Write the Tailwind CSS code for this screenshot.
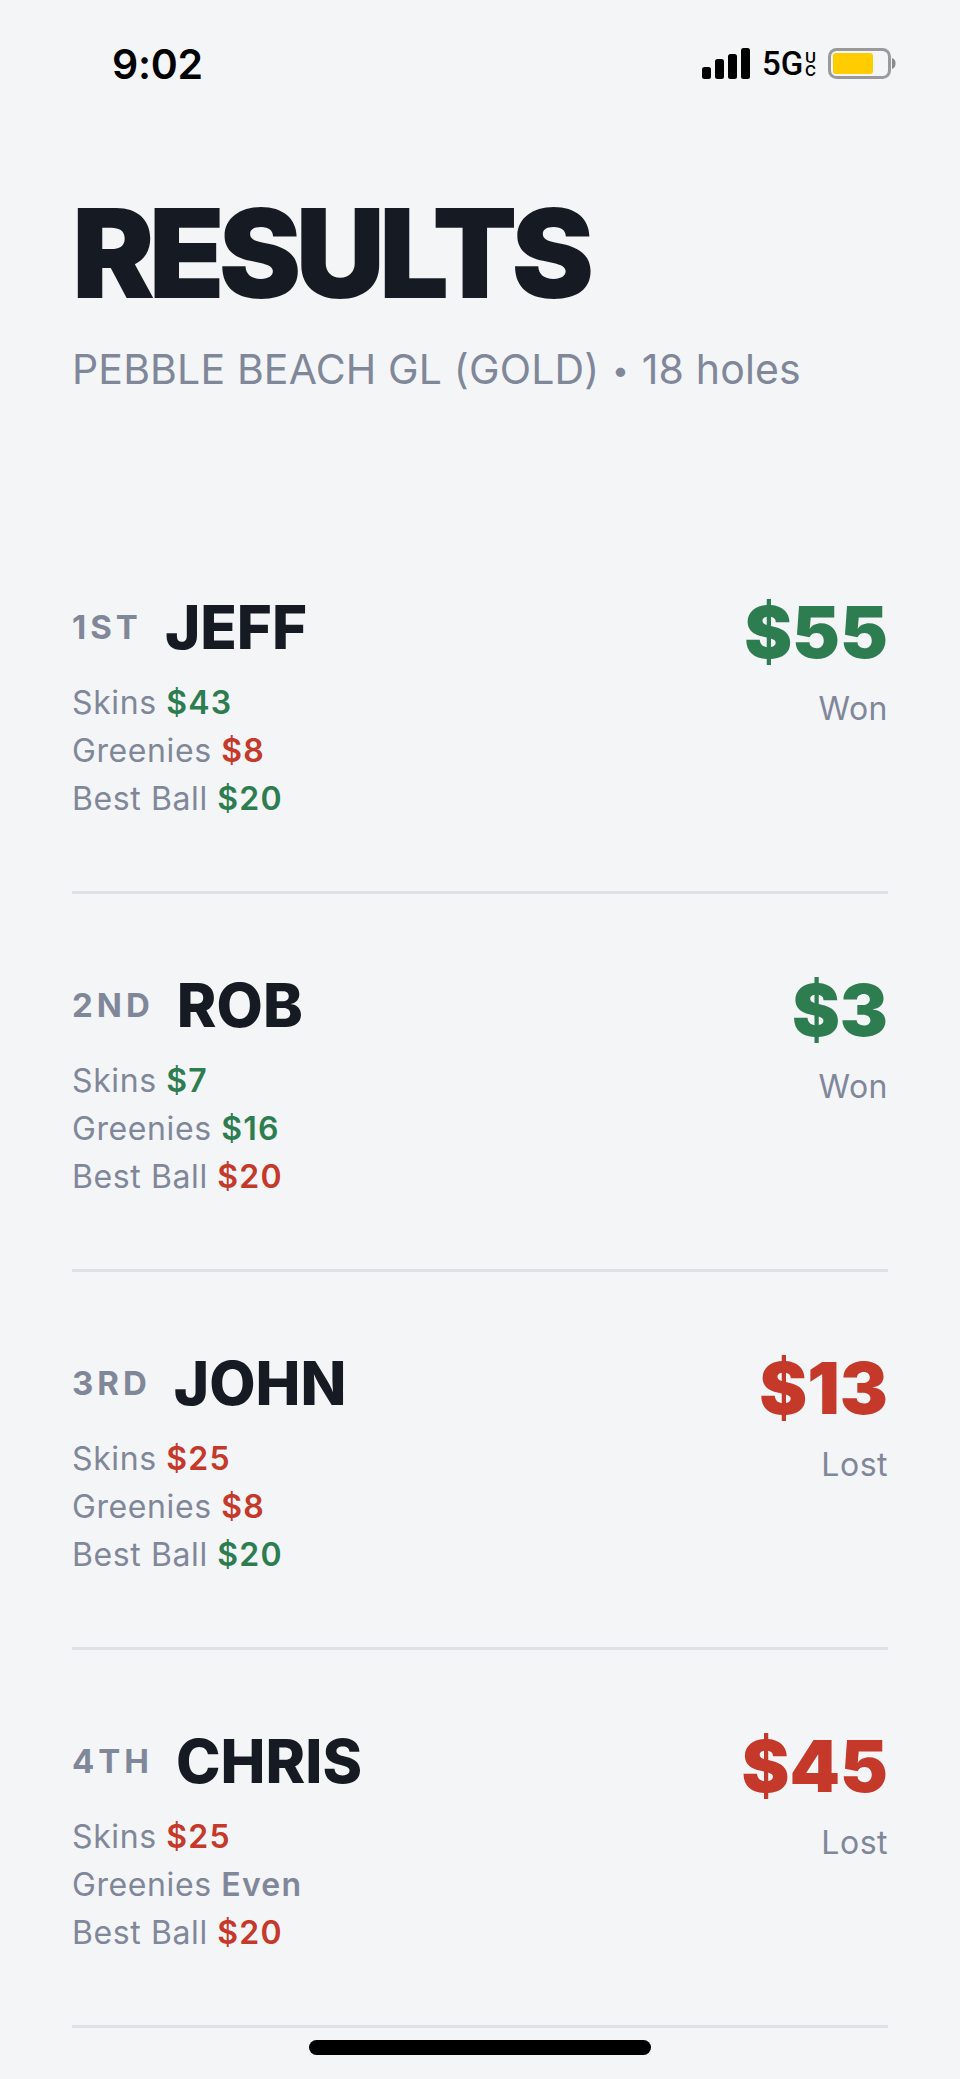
<!DOCTYPE html>
<html lang="en">
<head>
  <meta charset="UTF-8" />
  <meta name="viewport" content="width=device-width, initial-scale=1.0"/>
  <title>Results</title>
  <script src="https://cdn.jsdelivr.net/npm/@tailwindcss/browser@4"></script>
</head>
<body class="bg-[#f4f5f7] font-['Inter',sans-serif] text-[#161a23]">
<div class="relative h-[2079px] w-[960px] overflow-hidden">

  <!-- Status bar -->
  <div class="flex h-[96px] items-start justify-between pl-[112px] pr-[62px] pt-[39px]">
    <span class="text-[41px] leading-[50px] font-semibold tracking-[-0.3px] text-black">9:02</span>
    <div class="flex items-center pt-[9px]">
      <svg width="48" height="32" viewBox="0 0 48 32" class="block">
        <rect x="0" y="19" width="9" height="12" rx="2.5" fill="#000"/>
        <rect x="13" y="11" width="9" height="20" rx="2.5" fill="#000"/>
        <rect x="26" y="6" width="9" height="25" rx="2.5" fill="#000"/>
        <rect x="39" y="0" width="9" height="31" rx="2.5" fill="#000"/>
      </svg>
      <span class="ml-[12px] w-[41px] font-['Roboto',sans-serif] text-[33px] leading-[32px] font-medium whitespace-nowrap text-black">5G</span>
      <span class="ml-[2px] w-[11px] text-center text-[15px] leading-[13px] font-semibold text-black">U<br>C</span>
      <svg width="70" height="32" viewBox="0 0 70 32" class="ml-[12px] block">
        <rect x="1.5" y="1.5" width="60" height="28" rx="7" fill="none" stroke="#9a9a9c" stroke-width="3"/>
        <rect x="5" y="5" width="40" height="21" rx="3" fill="#ffcc00"/>
        <path d="M64 10 C67 11 67.5 13 67.5 15.5 C67.5 18 67 20 64 21 Z" fill="#8a8a8c"/>
      </svg>
    </div>
  </div>

  <!-- Title -->
  <div class="px-[72px]">
    <h1 class="mt-[92px] text-[124px] leading-[130px] font-black tracking-[-6px]">RESULTS</h1>
    <p class="mt-[27px] text-[41px] leading-[48px] tracking-[0.15px] text-[#808799]">PEBBLE BEACH GL (GOLD) <span class="mx-[1px] align-[3px] text-[30px]">•</span> 18 holes</p>
  </div>

  <!-- Players -->
  <div class="mt-[122px] flex flex-col px-[72px]">

    <div class="flex h-[378px] items-start justify-between border-b-[3px] border-[#dfe1e7] pt-[76px]">
      <div>
        <div class="flex items-center gap-[23px]">
          <span class="text-[33px] leading-[70px] font-bold tracking-[4px] text-[#808799]">1ST</span>
          <span class="text-[60px] leading-[70px] font-extrabold">JEFF</span>
        </div>
        <div class="mt-[17px] text-[32px] leading-[48px] tracking-[0.6px] text-[#808799]">
          <p>Skins <span class="font-semibold tracking-[1.2px] text-[#2e7d50]">$43</span></p>
          <p>Greenies <span class="font-semibold tracking-[1.2px] text-[#c5392b]">$8</span></p>
          <p>Best Ball <span class="font-semibold tracking-[1.2px] text-[#2e7d50]">$20</span></p>
        </div>
      </div>
      <div class="pt-[3px] text-right">
        <p class="text-[72px] leading-[74px] font-black text-[#2e7d50]">$55</p>
        <p class="mt-[20px] text-[32px] leading-[40px] tracking-[0.5px] text-[#808799]">Won</p>
      </div>
    </div>

    <div class="flex h-[378px] items-start justify-between border-b-[3px] border-[#dfe1e7] pt-[76px]">
      <div>
        <div class="flex items-center gap-[23px]">
          <span class="text-[33px] leading-[70px] font-bold tracking-[4px] text-[#808799]">2ND</span>
          <span class="text-[60px] leading-[70px] font-extrabold">ROB</span>
        </div>
        <div class="mt-[17px] text-[32px] leading-[48px] tracking-[0.6px] text-[#808799]">
          <p>Skins <span class="font-semibold tracking-[1.2px] text-[#2e7d50]">$7</span></p>
          <p>Greenies <span class="font-semibold tracking-[1.2px] text-[#2e7d50]">$16</span></p>
          <p>Best Ball <span class="font-semibold tracking-[1.2px] text-[#c5392b]">$20</span></p>
        </div>
      </div>
      <div class="pt-[3px] text-right">
        <p class="text-[72px] leading-[74px] font-black text-[#2e7d50]">$3</p>
        <p class="mt-[20px] text-[32px] leading-[40px] tracking-[0.5px] text-[#808799]">Won</p>
      </div>
    </div>

    <div class="flex h-[378px] items-start justify-between border-b-[3px] border-[#dfe1e7] pt-[76px]">
      <div>
        <div class="flex items-center gap-[23px]">
          <span class="text-[33px] leading-[70px] font-bold tracking-[4px] text-[#808799]">3RD</span>
          <span class="text-[60px] leading-[70px] font-extrabold">JOHN</span>
        </div>
        <div class="mt-[17px] text-[32px] leading-[48px] tracking-[0.6px] text-[#808799]">
          <p>Skins <span class="font-semibold tracking-[1.2px] text-[#c5392b]">$25</span></p>
          <p>Greenies <span class="font-semibold tracking-[1.2px] text-[#c5392b]">$8</span></p>
          <p>Best Ball <span class="font-semibold tracking-[1.2px] text-[#2e7d50]">$20</span></p>
        </div>
      </div>
      <div class="pt-[3px] text-right">
        <p class="text-[72px] leading-[74px] font-black text-[#c5392b]">$13</p>
        <p class="mt-[20px] text-[32px] leading-[40px] tracking-[0.5px] text-[#808799]">Lost</p>
      </div>
    </div>

    <div class="flex h-[378px] items-start justify-between border-b-[3px] border-[#dfe1e7] pt-[76px]">
      <div>
        <div class="flex items-center gap-[23px]">
          <span class="text-[33px] leading-[70px] font-bold tracking-[4px] text-[#808799]">4TH</span>
          <span class="text-[60px] leading-[70px] font-extrabold">CHRIS</span>
        </div>
        <div class="mt-[17px] text-[32px] leading-[48px] tracking-[0.6px] text-[#808799]">
          <p>Skins <span class="font-semibold tracking-[1.2px] text-[#c5392b]">$25</span></p>
          <p>Greenies <span class="font-semibold tracking-[1.2px]">Even</span></p>
          <p>Best Ball <span class="font-semibold tracking-[1.2px] text-[#c5392b]">$20</span></p>
        </div>
      </div>
      <div class="pt-[3px] text-right">
        <p class="text-[72px] leading-[74px] font-black text-[#c5392b]">$45</p>
        <p class="mt-[20px] text-[32px] leading-[40px] tracking-[0.5px] text-[#808799]">Lost</p>
      </div>
    </div>

  </div>

  <!-- Home indicator -->
  <div class="absolute bottom-[24px] left-[309px] h-[15px] w-[342px] rounded-full bg-black"></div>
</div>
</body>
</html>
